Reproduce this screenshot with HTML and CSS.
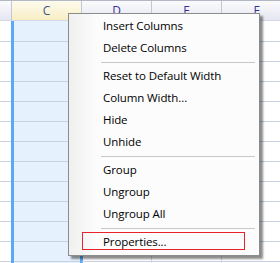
FILE: index.html
```html
<!DOCTYPE html>
<html lang="en">
<head>
  <meta charset="UTF-8" />
  <title>Column Menu</title>
  <link rel="stylesheet" href="styles.css">
</head>
<body>
  <div class="sheet">
    <div class="col col-b">
      <div class="col-head"></div>
      <div class="col-body"></div>
    </div>
    <div class="col col-c selected">
      <div class="col-head">C</div>
      <div class="col-body"></div>
    </div>
    <div class="col">
      <div class="col-head">D</div>
      <div class="col-body"></div>
    </div>
    <div class="col">
      <div class="col-head">E</div>
      <div class="col-body"></div>
    </div>
    <div class="col">
      <div class="col-head">F</div>
      <div class="col-body"></div>
    </div>

    <ul class="context-menu">
      <li class="menu-item">Insert Columns</li>
      <li class="menu-item">Delete Columns</li>
      <li class="menu-sep"></li>
      <li class="menu-item">Reset to Default Width</li>
      <li class="menu-item">Column Width...</li>
      <li class="menu-item">Hide</li>
      <li class="menu-item">Unhide</li>
      <li class="menu-sep"></li>
      <li class="menu-item">Group</li>
      <li class="menu-item">Ungroup</li>
      <li class="menu-item">Ungroup All</li>
      <li class="menu-sep"></li>
      <li class="menu-item marked">Properties...</li>
    </ul>
  </div>
</body>
</html>
```

FILE: styles.css
```css
* {
  margin: 0;
  padding: 0;
  box-sizing: border-box;
}

body {
  font-family: 'Segoe UI', 'Open Sans', 'Liberation Sans', sans-serif;
  font-size: 12px;
  background: white;
}

.sheet {
  position: relative;
  display: flex;
  width: 280px;
  height: 263px;
  overflow: hidden;
  border-top: 1px solid #b4b8c4;
}

.col {
  display: flex;
  flex-direction: column;
  flex: none;
  width: 70px;
}

.col-b {
  width: 12px;
}

.col-head {
  height: 20px;
  border-right: 1px solid #c4c8d4;
  border-bottom: 1px solid #d4d8e4;
  background: linear-gradient(#fbfbfd, #e5e7f1);
  color: #3a2f98;
  text-align: center;
  line-height: 19px;
}

.col-body {
  flex: 1;
  border-right: 1px solid #d6dce8;
  background: repeating-linear-gradient(to bottom, transparent 0 19px, #c9d2e2 19px 20px);
  background-position: 0 1px;
}

.selected .col-head {
  background: linear-gradient(#fdfbef, #f8eec4);
  color: #3d5288;
}

.selected .col-body {
  margin-left: -1px;
  margin-right: -1px;
  border-left: 3px solid #5aa9f6;
  border-right: 3px solid #5aa9f6;
  background-color: #e5f1fd;
}

/* context menu */
.context-menu {
  position: absolute;
  left: 68px;
  top: 12px;
  width: 192px;
  padding-bottom: 3px;
  list-style: none;
  border: 1px solid #8c8c8c;
  background: linear-gradient(to right, #f0f0f0, #fafafa 24px, #fcfcfc 25px);
  box-shadow: 3px 3px 2px rgba(0, 0, 0, 0.45);
  color: #000;
  font-size: 11.5px;
  letter-spacing: -0.1px;
}

.menu-item {
  position: relative;
  height: 22px;
  line-height: 23px;
  padding-left: 34px;
  white-space: nowrap;
}

.menu-sep {
  height: 6px;
  margin: 0 4px 0 32px;
  padding-top: 4px;
}

.menu-sep::before {
  content: '';
  display: block;
  height: 2px;
  border-top: 1px solid #c8c8c8;
  border-bottom: 1px solid #ffffff;
}

.marked::after {
  content: '';
  position: absolute;
  top: 2px;
  bottom: 2px;
  left: 13px;
  right: 14px;
  border: 1px solid #e8232b;
}
```
